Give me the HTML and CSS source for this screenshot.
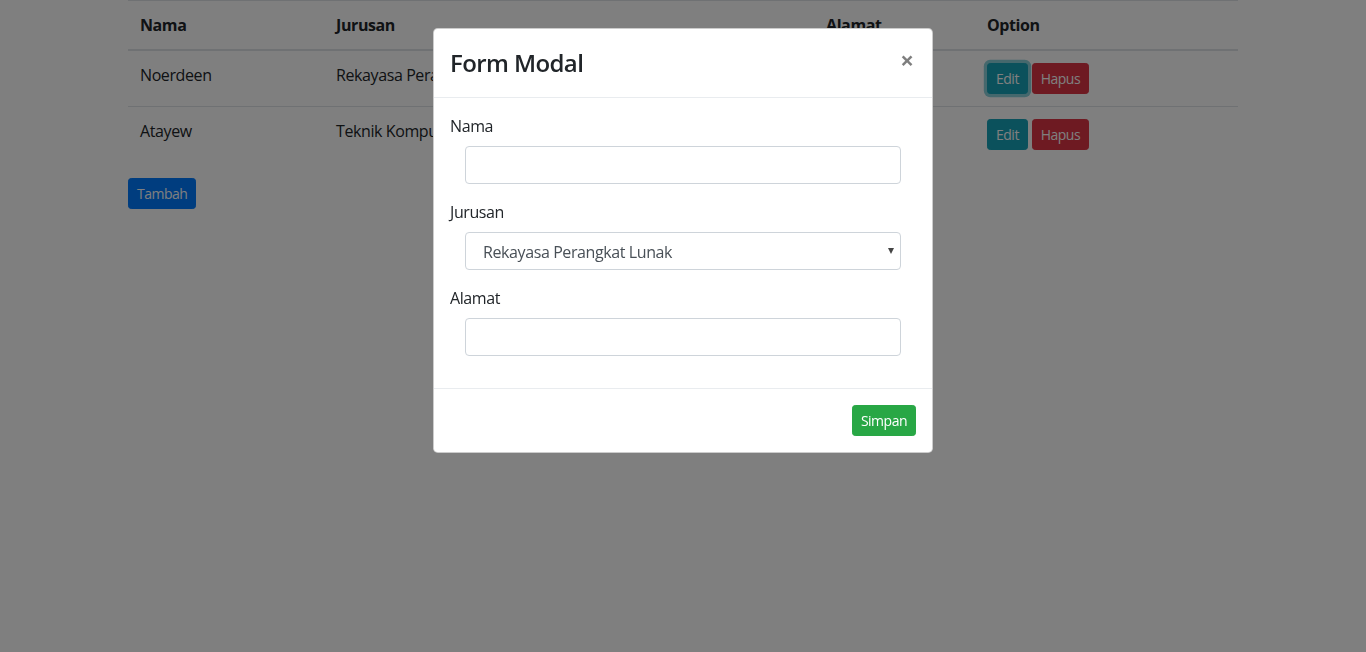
FILE: index.html
```html
<!DOCTYPE html>
<html lang="id">
<head>
<meta charset="utf-8">
<title>Data</title>
<link rel="stylesheet" href="styles.css">
</head>
<body>
<div class="container">
  <table class="table">
    <thead>
      <tr>
        <th class="c-nama">Nama</th>
        <th class="c-jur">Jurusan</th>
        <th class="c-alamat">Alamat</th>
        <th>Option</th>
      </tr>
    </thead>
    <tbody>
      <tr>
        <td>Noerdeen</td>
        <td>Rekayasa Perangkat Lunak</td>
        <td>Bandung</td>
        <td><button class="btn btn-sm btn-info focus">Edit</button> <button class="btn btn-sm btn-danger">Hapus</button></td>
      </tr>
      <tr>
        <td>Atayew</td>
        <td>Teknik Komputer dan Jaringan</td>
        <td>Jakarta</td>
        <td><button class="btn btn-sm btn-info">Edit</button> <button class="btn btn-sm btn-danger">Hapus</button></td>
      </tr>
    </tbody>
  </table>
  <button class="btn btn-sm btn-primary">Tambah</button>
</div>

<div class="backdrop"></div>
<div class="modal">
  <div class="modal-dialog">
    <div class="modal-content">
      <div class="modal-header">
        <h4 class="modal-title">Form Modal</h4>
        <button class="close" type="button">&times;</button>
      </div>
      <div class="modal-body">
        <div class="form-group">
          <label class="label">Nama</label>
          <div class="field"><input class="form-control" type="text"></div>
        </div>
        <div class="form-group">
          <label class="label">Jurusan</label>
          <div class="field select-wrap">
            <select class="form-control select">
              <option>Rekayasa Perangkat Lunak</option>
              <option>Teknik Komputer dan Jaringan</option>
            </select>
          </div>
        </div>
        <div class="form-group">
          <label class="label">Alamat</label>
          <div class="field"><input class="form-control" type="text"></div>
        </div>
      </div>
      <div class="modal-footer">
        <button class="btn btn-sm btn-success">Simpan</button>
      </div>
    </div>
  </div>
</div>
</body>
</html>
```
FILE: styles.css
```css
* { box-sizing: border-box; }
html, body { margin: 0; height: 100%; }
body {
  font-family: "Open Sans", "Noto Sans", sans-serif;
  font-size: 16px;
  line-height: 1.5;
  letter-spacing: -0.4px;
  color: #212529;
  background: #fff;
  overflow: hidden;
}
.container {
  max-width: 1140px;
  margin: 0 auto;
  padding: 0 15px;
}
.table {
  width: 100%;
  border-collapse: collapse;
  margin-bottom: 16px;
}
.table th, .table td {
  padding: 12px;
  text-align: left;
  vertical-align: top;
  border-top: 1px solid #dee2e6;
}
.table th { font-weight: 700; }
.table thead th { border-bottom: 2px solid #dee2e6; }
.c-nama { width: 196px; }
.c-jur { width: 490px; }
.c-alamat { width: 161px; }

.btn {
  display: inline-block;
  font-family: inherit;
  font-weight: 400;
  letter-spacing: -0.5px;
  border: 1px solid transparent;
  color: #fff;
  cursor: pointer;
  vertical-align: middle;
}
.btn-sm {
  padding: 4px 8px;
  font-size: 14px;
  line-height: 1.5;
  border-radius: 3.2px;
}
.btn-info { background: #17a2b8; border-color: #17a2b8; }
.btn-info.focus { box-shadow: 0 0 0 3.2px rgba(23,162,184,.5); }
.btn-danger { background: #dc3545; border-color: #dc3545; }
.btn-primary { background: #007bff; border-color: #007bff; }
.btn-success { background: #28a745; border-color: #28a745; }

.backdrop {
  position: fixed;
  inset: 0;
  background: rgba(0,0,0,.5);
}
.modal {
  position: fixed;
  inset: 0;
  overflow: hidden;
}
.modal-dialog {
  max-width: 500px;
  margin: 28px auto;
}
.modal-content {
  background: #fff;
  border: 1px solid rgba(0,0,0,.2);
  border-radius: 4.8px;
  display: flex;
  flex-direction: column;
}
.modal-header {
  display: flex;
  align-items: flex-start;
  justify-content: space-between;
  padding: 16px;
  border-bottom: 1px solid #e9ecef;
}
.modal-title {
  margin: 0;
  font-size: 24px;
  font-weight: 600;
  letter-spacing: -0.6px;
  line-height: 1.5;
}
.close {
  background: transparent;
  border: 0;
  padding: 16px;
  margin: -16px -14px -16px auto;
  font-family: inherit;
  font-size: 24px;
  font-weight: 700;
  line-height: 1.25;
  color: #000;
  opacity: .5;
  text-shadow: 0 1px 0 #fff;
  cursor: pointer;
}
.modal-body { padding: 16px; }
.form-group { margin-bottom: 16px; }
.label {
  display: inline-block;
  margin-bottom: 8px;
}
.field { padding: 0 15px; }
.form-control {
  display: block;
  width: 100%;
  height: 38px;
  padding: 6px 12px;
  font-family: inherit;
  font-size: 16px;
  letter-spacing: -0.4px;
  line-height: 1.5;
  color: #495057;
  background: #fff;
  border: 1px solid #ced4da;
  border-radius: 4px;
}
.select-wrap { position: relative; }
.select {
  appearance: none;
  -webkit-appearance: none;
  padding-left: 17px;
  padding-top: 7px;
}
.select-wrap::after {
  content: "";
  position: absolute;
  right: 22px;
  top: 16px;
  border-left: 3.5px solid transparent;
  border-right: 3.5px solid transparent;
  border-top: 6px solid #444;
}
.modal-footer {
  display: flex;
  justify-content: flex-end;
  padding: 16px;
  border-top: 1px solid #e9ecef;
}
```
